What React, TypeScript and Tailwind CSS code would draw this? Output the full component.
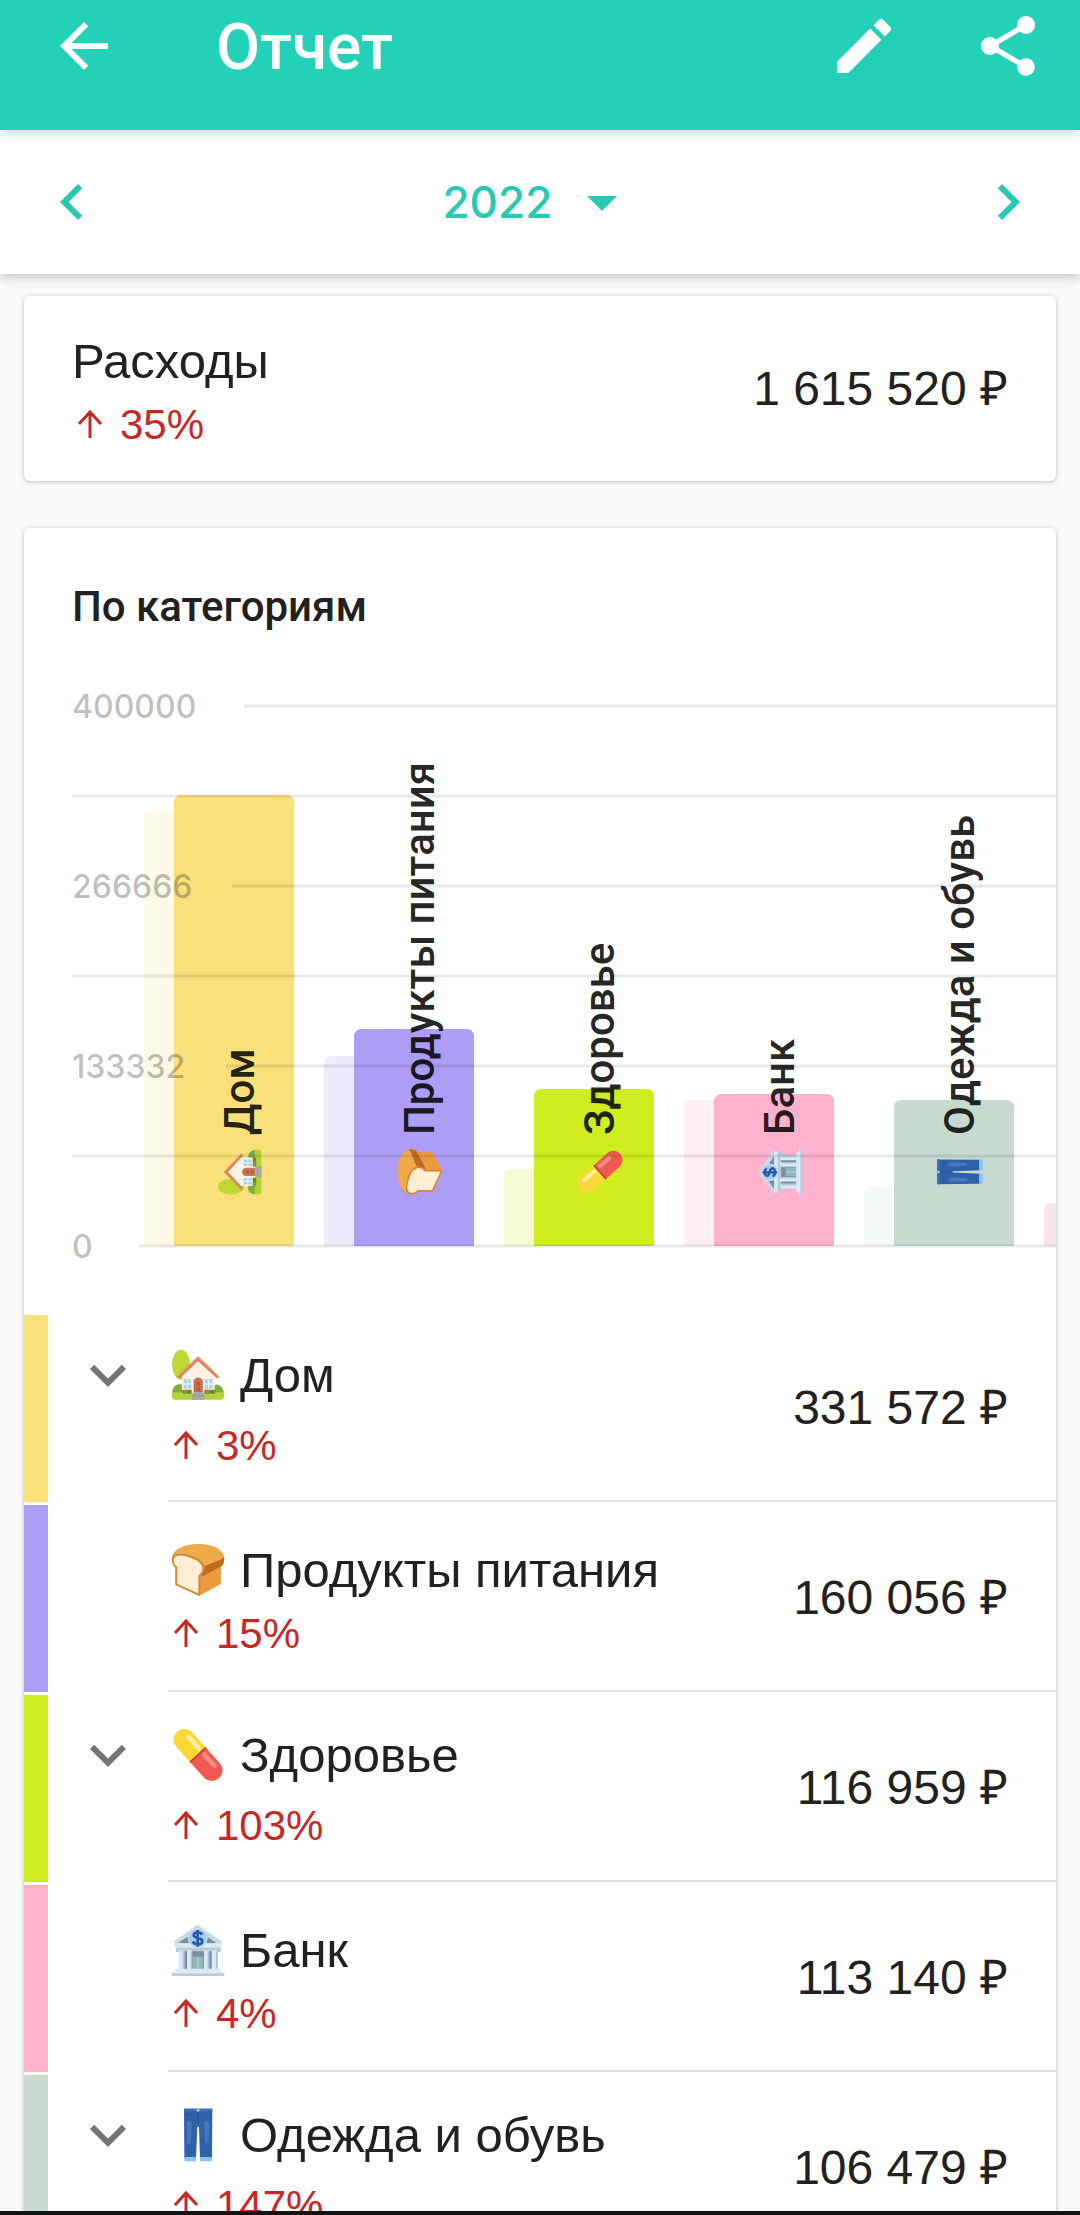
import { useState, type ReactNode } from "react";
import {
    MdArrowBack,
    MdArrowDropDown,
    MdChevronLeft,
    MdChevronRight,
    MdEdit,
    MdExpandMore,
    MdShare,
} from "react-icons/md";

type EmojiName = "house" | "bread" | "pill" | "bank" | "jeans";

type Category = {
    name: string;
    emoji: EmojiName;
    amount: string;
    change: string;
    expandable: boolean;
    color: string;
    prevColor: string;
    height: number;
    prevHeight: number;
};

const categories: Category[] = [
    { name: "Дом", emoji: "house", amount: "331 572 ₽", change: "3%", expandable: true, color: "#f9e07b", prevColor: "#fdf9e5", height: 451, prevHeight: 435 },
    { name: "Продукты питания", emoji: "bread", amount: "160 056 ₽", change: "15%", expandable: false, color: "#ae9df5", prevColor: "#eeebfd", height: 217, prevHeight: 190 },
    { name: "Здоровье", emoji: "pill", amount: "116 959 ₽", change: "103%", expandable: true, color: "#cfec1f", prevColor: "#f4fad2", height: 157, prevHeight: 77 },
    { name: "Банк", emoji: "bank", amount: "113 140 ₽", change: "4%", expandable: false, color: "#fdb1cd", prevColor: "#ffeff5", height: 152, prevHeight: 146 },
    { name: "Одежда и обувь", emoji: "jeans", amount: "106 479 ₽", change: "147%", expandable: true, color: "#c7dacf", prevColor: "#f4f8f6", height: 146, prevHeight: 59 },
];

const gridLines = [
    { y: 71, x: 220, label: "400000" },
    { y: 161, x: 48 },
    { y: 251, x: 208, label: "266666" },
    { y: 341, x: 48 },
    { y: 431, x: 202, label: "133332" },
    { y: 521, x: 48 },
    { y: 611, x: 115, label: "0" },
];

const BASE_Y = 611;
const BAR_STEP = 180;

const emojiArt: Record<EmojiName, { viewBox: string; art: ReactNode }> = {
    house: {
        viewBox: "24 22 180 180",
        art: (
            <>
                <ellipse cx="63" cy="81" rx="27" ry="45" fill="#bfd731" />
                <path d="M36 172c0-8 3-13 10-14l136-1c7 1 10 6 10 14v6c0 6-4 9-9 9H45c-6 0-9-4-9-9z" fill="#b2d235" />
                <path d="M37 164c0-14 10-27 24-24 13 2 16 12 12 24zM158 164c-4-16 6-28 18-22 9 4 14 12 15 22z" fill="#7fae3c" />
                <path d="M114 64l50 48v54H66v-54z" fill="#fbf1e4" />
                <path d="M114 56l65 62-8 4-57-52-55 52-9-4z" fill="#d9774f" />
                <path d="M114 56l65 62-4 2-61-57-60 57-4-2z" fill="#e8936c" />
                <path d="M71 125h22v28H71zM135 125h22v28h-22z" fill="#a8d5e5" />
                <path d="M71 139h22M82 125v28M135 139h22M146 125v28" stroke="#fff" strokeWidth="3" />
                <path d="M102 164v-32c0-15 25-15 25 0v32z" fill="#cf6f4d" stroke="#b25a3c" strokeWidth="2" />
                <path d="M109 134h11v10h-11zM109 149h11v10h-11z" fill="#b5583b" />
                <path d="M66 156h29v12H66zM133 156h32v12h-32z" fill="#7d8b35" />
                <circle cx="74" cy="162" r="4" fill="#e0783e" />
                <circle cx="87" cy="162" r="4" fill="#5c7f2b" />
                <circle cx="143" cy="162" r="4" fill="#e0783e" />
                <circle cx="156" cy="162" r="4" fill="#5c7f2b" />
                <path d="M99 163h31v11h3v13H96v-13h3z" fill="#a9a9a9" />
                <path d="M96 174h37" stroke="#8c8c8c" strokeWidth="2" />
            </>
        ),
    },
    bread: {
        viewBox: "24 27 180 180",
        art: (
            <>
                <path d="M36 84c0-28 36-44 80-44 42 0 77 16 77 44 0 11-4 19-11 24v50l-66 36-70-32v-52c-7-6-10-15-10-26z" fill="#e2933a" />
                <path d="M40 76c6-22 38-36 76-36 40 0 70 14 76 38-8 12-38 16-58 28-3-16-24-28-48-34-18-4-36-4-46 4z" fill="#f0aa4a" />
                <path d="M134 106c20-12 50-16 58-28 2 14-3 25-10 30l-56 30c-4-8 10-14 8-32z" fill="#bd6b22" />
                <path d="M118 141l64-34v51l-64 36z" fill="#ec9a3c" />
                <path d="M39 86c0-14 18-18 39-13 25 6 50 19 52 37 1 13-4 18-12 24v58l-69-32v-51c-7-4-10-13-10-23z" fill="#ffeed3" stroke="#d18635" strokeWidth="5" strokeLinejoin="round" />
            </>
        ),
    },
    pill: {
        viewBox: "24 46 180 180",
        art: (
            <g transform="rotate(48 114 136)">
                <path d="M114 104H52a32 32 0 0 0 0 64h62z" fill="#fdd835" />
                <path d="M114 104h62a32 32 0 0 1 0 64h-62z" fill="#f05a50" />
                <path d="M111 104h5v64h-5z" fill="#c8372f" />
                <path d="M54 114h53v14H57c-11 0-13-14-3-14z" fill="#fff0a0" />
                <path d="M120 114h50c11 0 11 14 0 14h-50z" fill="#f98c84" />
            </g>
        ),
    },
    bank: {
        viewBox: "24 28 180 180",
        art: (
            <>
                <path d="M112 42l73 50v10H43V92z" fill="#c5d9e6" />
                <path d="M112 58l58 40H54z" fill="#78909c" />
                <path d="M48 110h134v14H48z" fill="#b5cbda" />
                <path d="M43 98h142v12H43z" fill="#dceaf4" />
                <path d="M58 122h114v56H58z" fill="#7c91a0" />
                <path d="M56 119h17v58H56zM81 119h15v58H81zM132 119h15v58h-15zM155 119h17v58h-17z" fill="#d8e8f4" />
                <path d="M68 122h5v54h-5zM92 122h5v54h-5zM143 122h5v54h-5zM168 122h5v54h-5z" fill="#b0c6d6" />
                <path d="M98 138h32v40H98z" fill="#90b8bc" />
                <path d="M114 138v40" stroke="#c1dde0" strokeWidth="3" />
                <path d="M46 174h136v10H46z" fill="#d8e8f4" />
                <path d="M36 184h157v12H36z" fill="#b9cddb" />
                <path d="M36 184h157v4H36z" fill="#e3eff8" />
                <circle cx="113" cy="82" r="30" fill="#cfe3f3" />
                <circle cx="113" cy="82" r="27" fill="#a9cbe8" />
                <path d="M126 72c-3-8-25-10-25 1 0 12 26 6 26 19 0 12-25 11-28 0M113 58v50" fill="none" stroke="#2459a9" strokeWidth="8" />
            </>
        ),
    },
    jeans: {
        viewBox: "25 31 180 180",
        art: (
            <>
                <path d="M73 42h85l-1 150h-36l-3-92c0-6-5-6-5 0l-4 92H74z" fill="#2f62ab" />
                <path d="M82 82c6-6 16 0 15 14l-4 46c-4 10-10 8-11-2zM134 82c6-6 15-2 15 12l-3 46c-3 10-9 10-10 0z" fill="#4378bd" />
                <path d="M73 42h85v8H73z" fill="#3b70ba" />
                <path d="M75 58c12 4 20 0 22-8M157 58c-12 4-20 0-22-8M115 50v38" fill="none" stroke="#234f91" strokeWidth="2" />
                <circle cx="115" cy="47" r="4" fill="#cfd8dc" />
                <path d="M74 187h36l-1 13H75zM121 187h36l-2 13h-33z" fill="#8cc3f2" />
            </>
        ),
    },
};

function CategoryChart() {
    return (
        <svg className="block h-[680px] w-full" role="img" aria-label="Расходы по категориям">
            {categories.map((item, index) => {
                const x = 120 + index * BAR_STEP;
                return (
                    <g key={item.name}>
                        <path
                            d={`M${x} ${BASE_Y}v-${item.prevHeight - 8}q0-8 8-8h32V${BASE_Y}z`}
                            fill={item.prevColor}
                        />
                        <path
                            d={`M${x + 30} ${BASE_Y}v-${item.height - 8}q0-8 8-8h104q8 0 8 8V${BASE_Y}z`}
                            fill={item.color}
                        />
                        <g transform={`translate(${x + 70} 563) rotate(-90)`}>
                            <svg width="52" height="52" viewBox={emojiArt[item.emoji].viewBox}>
                                {emojiArt[item.emoji].art}
                            </svg>
                        </g>
                    </g>
                );
            })}
            <path d="M1020 611v-35q0-8 8-8h32v43z" fill="#f9e4ec" />

            {gridLines.map((line) => (
                <g key={line.y}>
                    <line x1={line.x} x2="100%" y1={line.y} y2={line.y} stroke="#000" strokeOpacity="0.09" strokeWidth="3" />
                    {line.label && (
                        <text x="48" y={line.y + 12} fill="#000" fillOpacity="0.26" className="font-['Inter',sans-serif] text-[32px] font-medium">
                            {line.label}
                        </text>
                    )}
                </g>
            ))}

            {categories.map((item, index) => (
                <text
                    key={item.name}
                    transform={`translate(${230 + index * BAR_STEP} 500) rotate(-90)`}
                    fill="#000"
                    fillOpacity="0.87"
                    className="font-['Roboto',sans-serif] text-[42px] font-medium"
                >
                    {item.name}
                </text>
            ))}
        </svg>
    );
}

function Change({ value }: { value: string }) {
    return (
        <div className="flex h-[70px] items-center gap-3 text-[42px] text-[#c62828]">
            <svg className="size-9" viewBox="0 0 36 36" fill="none" stroke="currentColor" strokeWidth="3" aria-hidden="true">
                <path d="M18 31V5M7 17L18 5l11 12" />
            </svg>
            {value}
        </div>
    );
}

function CategoryRow({ item }: { item: Category }) {
    return (
        <li className="flex h-[190px]">
            <div className="mb-[3px] w-6 shrink-0" style={{ backgroundColor: item.color }} />
            <div className={item.expandable ? "w-30 shrink-0 pt-6 pl-6" : "w-30 shrink-0"}>
                {item.expandable && (
                    <button type="button" aria-label={`Раскрыть ${item.name}`} className="block text-[#757575]">
                        <MdExpandMore size={72} />
                    </button>
                )}
            </div>
            <div className="mb-[3px] flex flex-1 items-center justify-between border-b-2 border-[#dcdcdc] pr-12">
                <div className={item.expandable ? "self-start pt-6" : "self-start pt-9"}>
                    <div className={item.expandable ? "flex h-[72px] items-center gap-3" : "flex h-[58px] items-center gap-3"}>
                        <svg className="size-[60px]" viewBox={emojiArt[item.emoji].viewBox} aria-hidden="true">
                            {emojiArt[item.emoji].art}
                        </svg>
                        <span className="text-[49px]">{item.name}</span>
                    </div>
                    <Change value={item.change} />
                </div>
                <span className="text-[48px] whitespace-nowrap">{item.amount}</span>
            </div>
        </li>
    );
}

export default function App() {
    const [year, setYear] = useState("2022");

    return (
        <div className="flex h-screen flex-col overflow-hidden bg-[#fafafa] font-['Liberation_Sans',Arial,sans-serif] leading-none text-[#212121]">
            <header className="relative z-20 flex shrink-0 items-center bg-[#23d1b8] px-9 pt-[10px] pb-12 text-white shadow-[0_2px_12px_rgba(0,0,0,0.2)]">
                <button type="button" aria-label="Назад" className="ml-3">
                    <MdArrowBack size={72} />
                </button>
                <h1 className="ml-24 flex-1 pt-1 font-['Roboto',sans-serif] text-[64px] font-medium">Отчет</h1>
                <div className="flex gap-[72px]">
                    <button type="button" aria-label="Изменить">
                        <MdEdit size={72} />
                    </button>
                    <button type="button" aria-label="Поделиться">
                        <MdShare size={72} />
                    </button>
                </div>
            </header>

            <nav className="relative z-10 flex h-36 shrink-0 items-center justify-between bg-white px-9 text-[#26c9b2] shadow-[0_2px_12px_rgba(0,0,0,0.25)]">
                <button type="button" aria-label="Предыдущий год" onClick={() => setYear(String(Number(year) - 1))}>
                    <MdChevronLeft size={72} />
                </button>
                <label className="flex items-center gap-3">
                    <select
                        aria-label="Год"
                        value={year}
                        onChange={(e) => setYear(e.target.value)}
                        className="appearance-none font-['Inter',sans-serif] text-[44px] font-medium"
                    >
                        <option>2021</option>
                        <option>2022</option>
                        <option>2023</option>
                    </select>
                    <MdArrowDropDown size={72} />
                </label>
                <button type="button" aria-label="Следующий год" onClick={() => setYear(String(Number(year) + 1))}>
                    <MdChevronRight size={72} />
                </button>
            </nav>

            <main className="min-h-0 flex-1 overflow-y-auto px-6 pt-[22px] [scrollbar-width:none]">
                <section className="flex h-[185px] items-center justify-between rounded-md bg-white px-12 shadow-[0_1px_5px_rgba(0,0,0,0.25)]">
                    <div className="self-start pt-9">
                        <h2 className="flex h-[58px] items-center text-[49px]">Расходы</h2>
                        <Change value="35%" />
                    </div>
                    <span className="text-[48px]">1 615 520 ₽</span>
                </section>

                <section className="mt-[47px] overflow-hidden rounded-md bg-white shadow-[0_1px_5px_rgba(0,0,0,0.25)]">
                    <h2 className="px-12 pt-[51px] font-['Roboto',sans-serif] text-[42px] leading-[56px] font-medium">
                        По категориям
                    </h2>
                    <CategoryChart />
                    <ul>
                        {categories.map((item) => (
                            <CategoryRow key={item.name} item={item} />
                        ))}
                    </ul>
                </section>
            </main>

            <div className="h-1 shrink-0 bg-[#111414]" />
        </div>
    );
}
